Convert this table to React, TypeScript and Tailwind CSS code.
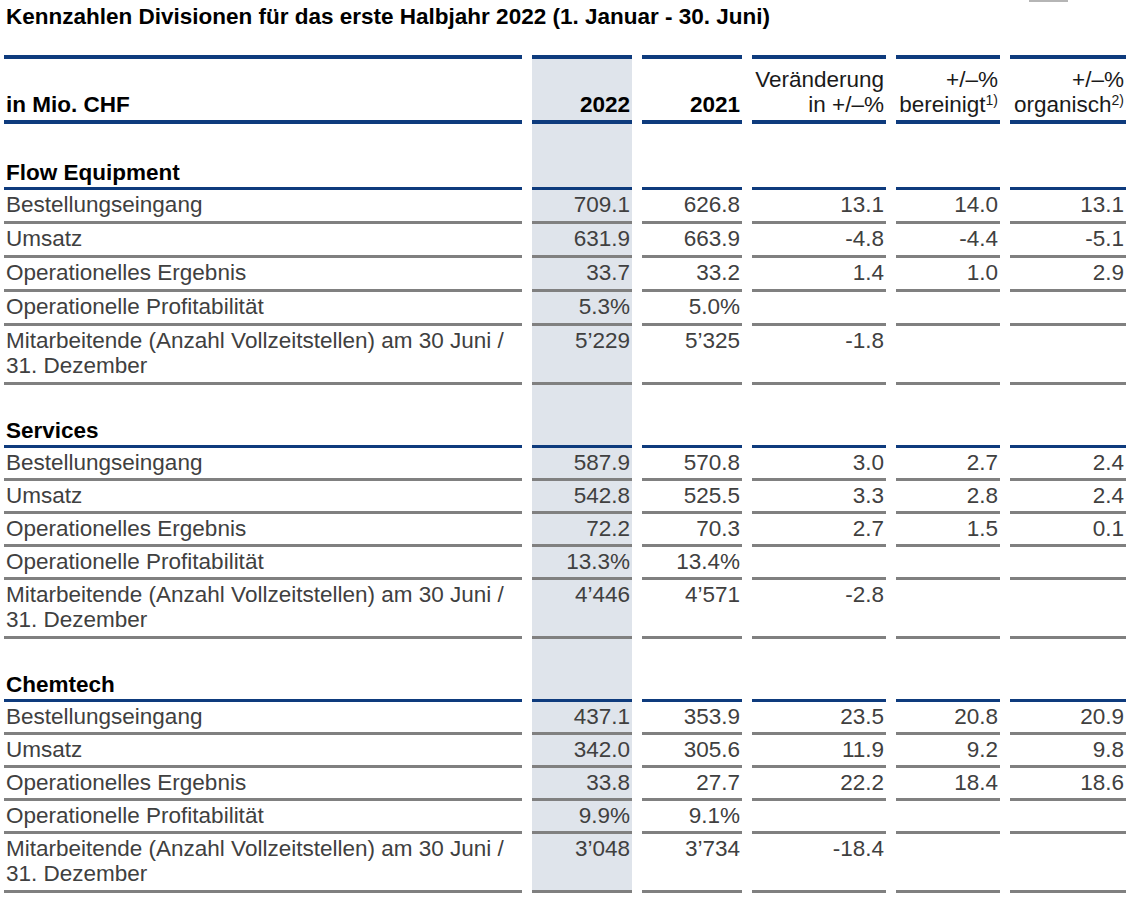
import React from 'react'

type Row = [string, string, string, string, string, string]

interface Section {
  title: string
  rows: Row[]
}

const sections: Section[] = [
  {
    title: 'Flow Equipment',
    rows: [
      ['Bestellungseingang', '709.1', '626.8', '13.1', '14.0', '13.1'],
      ['Umsatz', '631.9', '663.9', '-4.8', '-4.4', '-5.1'],
      ['Operationelles Ergebnis', '33.7', '33.2', '1.4', '1.0', '2.9'],
      ['Operationelle Profitabilität', '5.3%', '5.0%', '', '', ''],
      ['Mitarbeitende', '5’229', '5’325', '-1.8', '', ''],
    ],
  },
  {
    title: 'Services',
    rows: [
      ['Bestellungseingang', '587.9', '570.8', '3.0', '2.7', '2.4'],
      ['Umsatz', '542.8', '525.5', '3.3', '2.8', '2.4'],
      ['Operationelles Ergebnis', '72.2', '70.3', '2.7', '1.5', '0.1'],
      ['Operationelle Profitabilität', '13.3%', '13.4%', '', '', ''],
      ['Mitarbeitende', '4’446', '4’571', '-2.8', '', ''],
    ],
  },
  {
    title: 'Chemtech',
    rows: [
      ['Bestellungseingang', '437.1', '353.9', '23.5', '20.8', '20.9'],
      ['Umsatz', '342.0', '305.6', '11.9', '9.2', '9.8'],
      ['Operationelles Ergebnis', '33.8', '27.7', '22.2', '18.4', '18.6'],
      ['Operationelle Profitabilität', '9.9%', '9.1%', '', '', ''],
      ['Mitarbeitende', '3’048', '3’734', '-18.4', '', ''],
    ],
  },
]

const GRID = 'grid grid-cols-[518px_100px_100px_134px_104px_116px] gap-x-[10px]'
const SHADE = 'bg-[#dfe4eb]'

function SectionBlock({ section, first }: { section: Section; first: boolean }) {
  const rowH = first ? 'h-[34px]' : 'h-[33px]'
  return (
    <>
      {/* section title with blue rule */}
      <div className={GRID}>
        {[0, 1, 2, 3, 4, 5].map((i) => (
          <div
            key={i}
            className={`${first ? 'h-[66px]' : 'h-[63px]'} flex items-end border-b-[3px] border-[#0e3b7d] pb-[2px] pl-[2px] ${i === 1 ? SHADE : ''}`}
          >
            {i === 0 && <span className="font-bold text-black">{section.title}</span>}
          </div>
        ))}
      </div>

      {section.rows.map((row) => {
        const multi = row[0] === 'Mitarbeitende'
        return (
          <div key={row[0]} className={GRID}>
            {row.map((cell, i) => (
              <div
                key={i}
                className={`${multi ? 'h-[59px]' : rowH} border-b-[3px] border-[#808080] pt-[2px] ${
                  i === 0 ? 'pl-[2px]' : 'pr-[2px] text-right'
                } ${i === 1 ? SHADE : ''}`}
              >
                {i === 0 && multi ? (
                  <>
                    Mitarbeitende (Anzahl Vollzeitstellen) am 30 Juni /
                    <br />
                    31. Dezember
                  </>
                ) : (
                  cell
                )}
              </div>
            ))}
          </div>
        )
      })}
    </>
  )
}

export default function App() {
  return (
    <div className="min-h-[897px] bg-white pl-[4px] font-['Liberation_Sans',Arial,sans-serif] text-[22.5px] leading-[25px] text-[#404040]">
      <div className="flex h-[55px] items-start justify-between">
        <h1 className="mt-[4px] pl-[2px] text-[22.5px] font-bold leading-[25px] text-black">
          Kennzahlen Divisionen für das erste Halbjahr 2022 (1. Januar - 30. Juni)
        </h1>
        <div className="mr-[64px] h-[2px] w-[39px] bg-[#b5b5b5]" />
      </div>

      {/* top rule */}
      <div className={GRID}>
        {[0, 1, 2, 3, 4, 5].map((i) => (
          <div key={i} className="h-[4px] bg-[#0e3b7d]" />
        ))}
      </div>

      {/* header */}
      <div className={GRID}>
        <div className="flex h-[65px] items-end border-b-[4px] border-[#0e3b7d] pb-[3px] pl-[2px] font-bold text-black">
          in Mio. CHF
        </div>
        <div className={`flex h-[65px] items-end justify-end border-b-[4px] border-[#0e3b7d] pb-[3px] pr-[2px] font-bold text-black ${SHADE}`}>
          2022
        </div>
        <div className="flex h-[65px] items-end justify-end border-b-[4px] border-[#0e3b7d] pb-[3px] pr-[2px] font-bold text-black">
          2021
        </div>
        <div className="flex h-[65px] flex-col items-end justify-end border-b-[4px] border-[#0e3b7d] pb-[3px] pr-[2px] text-right text-[#1a1a1a]">
          <span>Veränderung</span>
          <span>in +/–%</span>
        </div>
        <div className="flex h-[65px] flex-col items-end justify-end border-b-[4px] border-[#0e3b7d] pb-[3px] pr-[2px] text-right text-[#1a1a1a]">
          <span>+/–%</span>
          <span>
            bereinigt<sup className="text-[14px]">1)</sup>
          </span>
        </div>
        <div className="flex h-[65px] flex-col items-end justify-end border-b-[4px] border-[#0e3b7d] pb-[3px] pr-[2px] text-right text-[#1a1a1a]">
          <span>+/–%</span>
          <span>
            organisch<sup className="text-[14px]">2)</sup>
          </span>
        </div>
      </div>

      {sections.map((s, idx) => (
        <SectionBlock key={s.title} section={s} first={idx === 0} />
      ))}
    </div>
  )
}
